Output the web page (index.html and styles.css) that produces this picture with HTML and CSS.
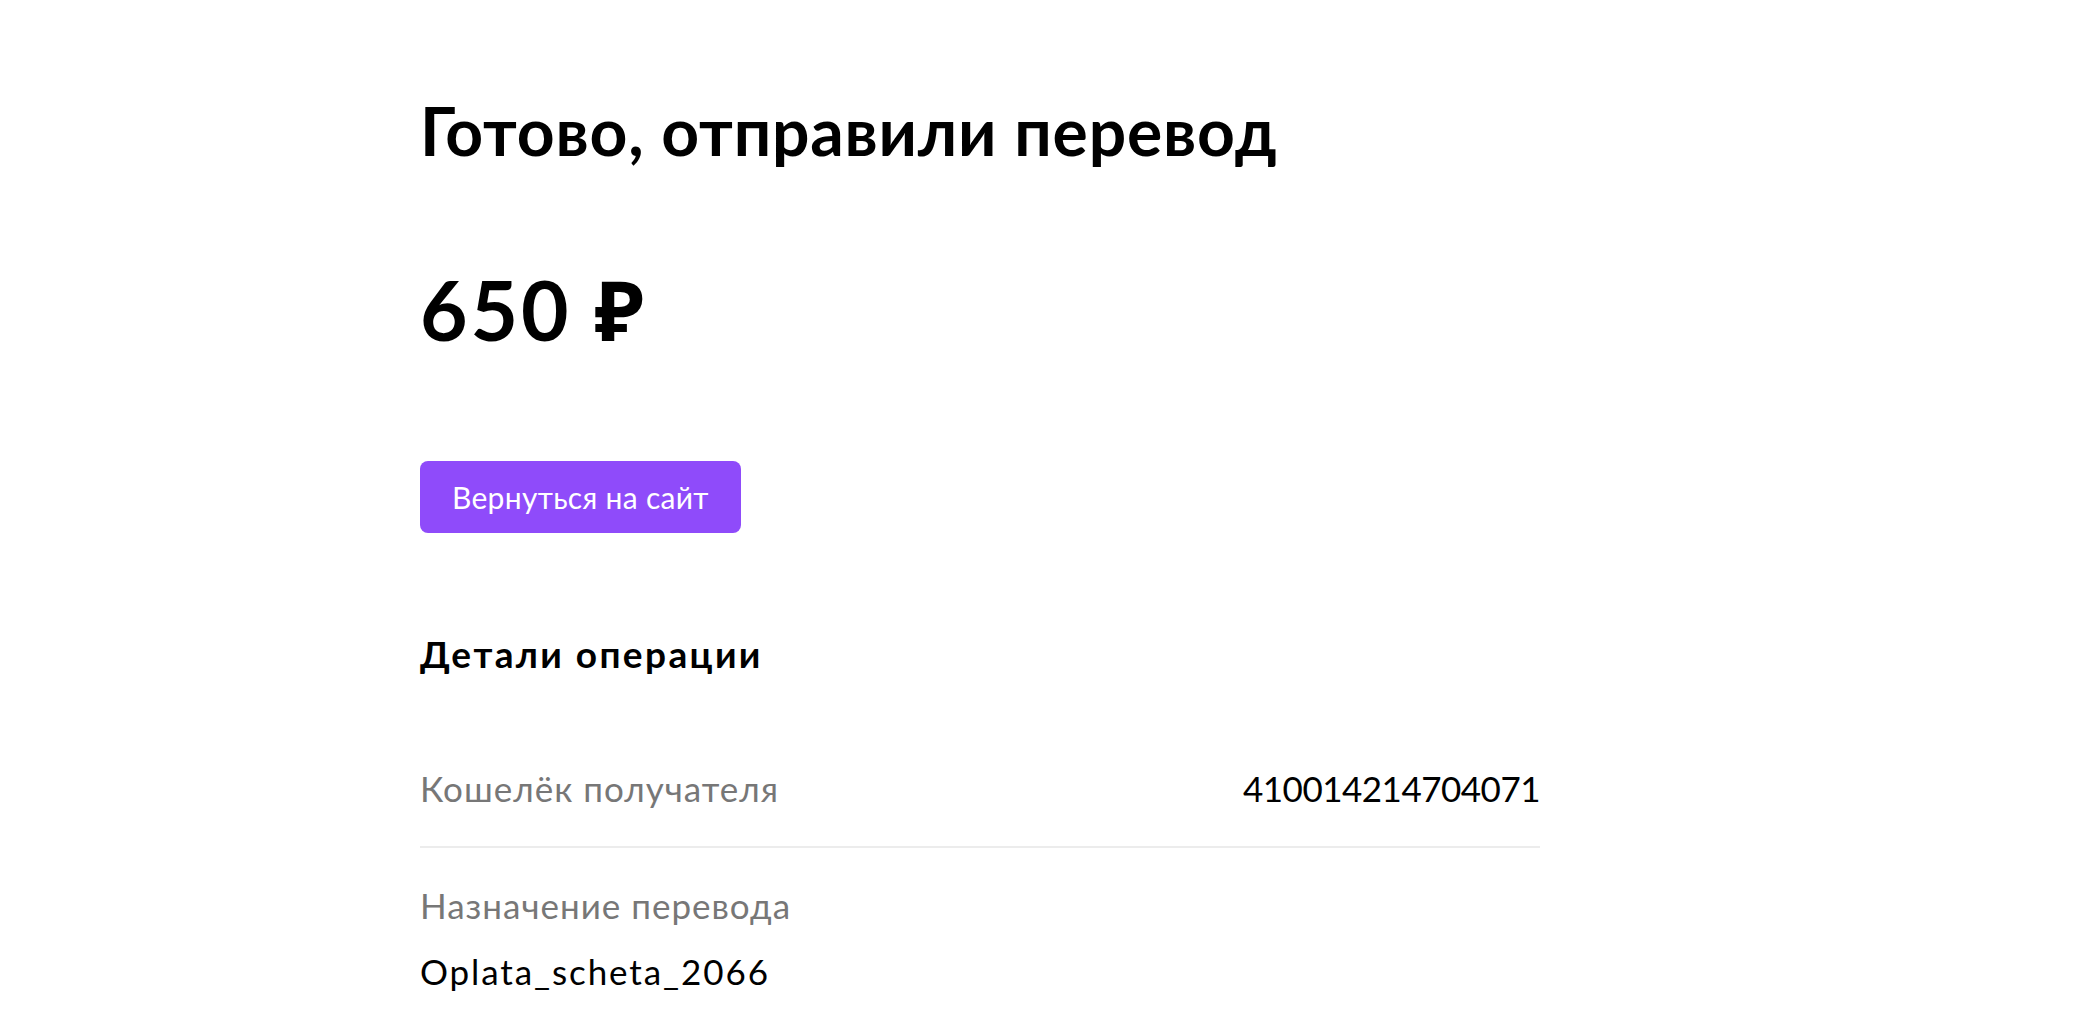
FILE: index.html
```html
<!DOCTYPE html>
<html lang="ru">
<head>
  <meta charset="UTF-8" />
  <title>Готово, отправили перевод</title>
  <link rel="stylesheet" href="styles.css">
</head>
<body>
  <div class="page">
    <h1 class="title">Готово, отправили перевод</h1>
    <div class="amount">650 ₽</div>
    <button class="back-btn">Вернуться на сайт</button>

    <h2 class="section-title">Детали операции</h2>
    <div class="details">
      <div class="row">
        <span class="label">Кошелёк получателя</span>
        <span class="value number">410014214704071</span>
      </div>
      <div class="row row-stack">
        <span class="label">Назначение перевода</span>
        <span class="value purpose">Oplata_scheta_2066</span>
      </div>
    </div>
  </div>
</body>
</html>
```

FILE: styles.css
```css
* {
  box-sizing: border-box;
}

body {
  margin: 0;
  background: #fff;
  color: #000;
  font-family: 'Lato', 'Noto Sans', sans-serif;
}

.page {
  width: 1120px;
  margin-left: 420px;
  padding-top: 91px;
}

.title {
  margin: 0;
  font-size: 66px;
  line-height: 1.2;
  font-weight: 700;
  letter-spacing: 0.8px;
}

.amount {
  margin-top: 90px;
  font-size: 82px;
  line-height: 1.2;
  font-weight: 700;
  letter-spacing: 3px;
}

.back-btn {
  display: block;
  margin-top: 102px;
  height: 72px;
  padding: 0 32px;
  border: none;
  border-radius: 8px;
  background-color: #8f4bfa;
  color: #fff;
  font-family: inherit;
  font-size: 30px;
  letter-spacing: 0.3px;
  cursor: pointer;
}

.section-title {
  margin: 99px 0 0;
  font-size: 37px;
  line-height: 1.2;
  font-weight: 700;
  letter-spacing: 2.4px;
}

.details {
  margin-top: 53px;
}

.row {
  display: flex;
  justify-content: space-between;
  padding: 38px 0 37px;
  border-bottom: 2px solid #ececec;
  font-size: 35px;
  line-height: 1.2;
}

.row-stack {
  flex-direction: column;
  padding-top: 36px;
  border-bottom: none;
  gap: 24px;
}

.label {
  color: #777;
  letter-spacing: 1px;
}

.value {
  color: #000;
}

.number {
  letter-spacing: -0.5px;
}

.purpose {
  letter-spacing: 1.9px;
}
```
